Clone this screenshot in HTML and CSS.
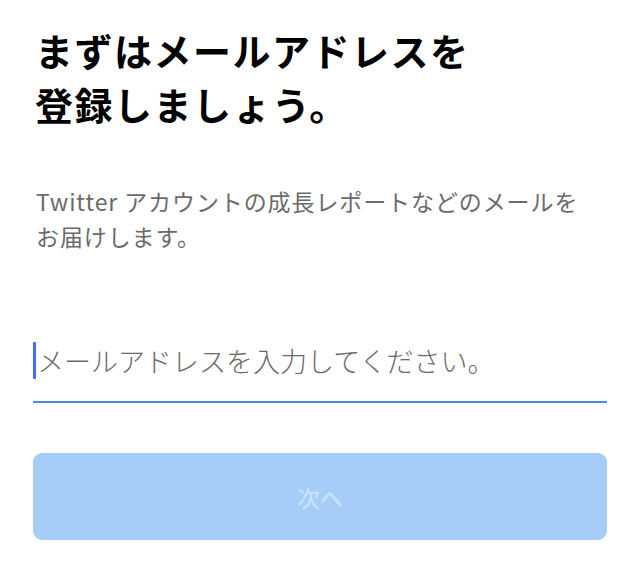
FILE: index.html
```html
<!DOCTYPE html>
<html lang="ja">
<head>
<meta charset="utf-8">
<link rel="stylesheet" href="styles.css">
</head>
<body>
<main class="page">
  <h1 class="title">まずはメールアドレスを<br>登録しましょう。</h1>
  <p class="lead">Twitter アカウントの成長レポートなどのメールを<br>お届けします。</p>
  <div class="field">
    <span class="caret"></span>
    <span class="placeholder">メールアドレスを入力してください。</span>
  </div>
  <button class="next" type="button">次へ</button>
</main>
</body>
</html>
```
FILE: styles.css
```css
html, body {
  margin: 0;
  padding: 0;
  background: #ffffff;
}
.page {
  padding: 23px 33px 0 33px;
  font-family: "Noto Sans CJK JP", "Noto Sans", sans-serif;
}
.title {
  margin: 0;
  font-size: 38px;
  line-height: 54px;
  font-weight: 700;
  color: #000000;
  letter-spacing: 1.5px;
  padding-left: 2px;
}
.lead {
  margin: 53px 0 0 0;
  padding-left: 3px;
  font-size: 23px;
  line-height: 35px;
  color: #6b6b6b;
  font-weight: 400;
  letter-spacing: 0.9px;
}
.field {
  margin-top: 88px;
  display: flex;
  align-items: flex-start;
  height: 59px;
  border-bottom: 2px solid #4a8fe2;
}
.caret {
  width: 3px;
  height: 37px;
  background: #3d6ff0;
  border-radius: 1px;
  flex: none;
}
.placeholder {
  font-size: 27px;
  line-height: 37px;
  color: #6b6b6b;
  font-weight: 300;
  margin-left: 1px;
  letter-spacing: 0px;
}
.next {
  display: block;
  width: 100%;
  height: 87px;
  margin-top: 50px;
  border: none;
  border-radius: 9px;
  background: #a5cdf7;
  color: #c8e2fb;
  font-family: "Noto Sans CJK JP", "Noto Sans", sans-serif;
  font-size: 23px;
  font-weight: 500;
  padding: 0;
}
```
